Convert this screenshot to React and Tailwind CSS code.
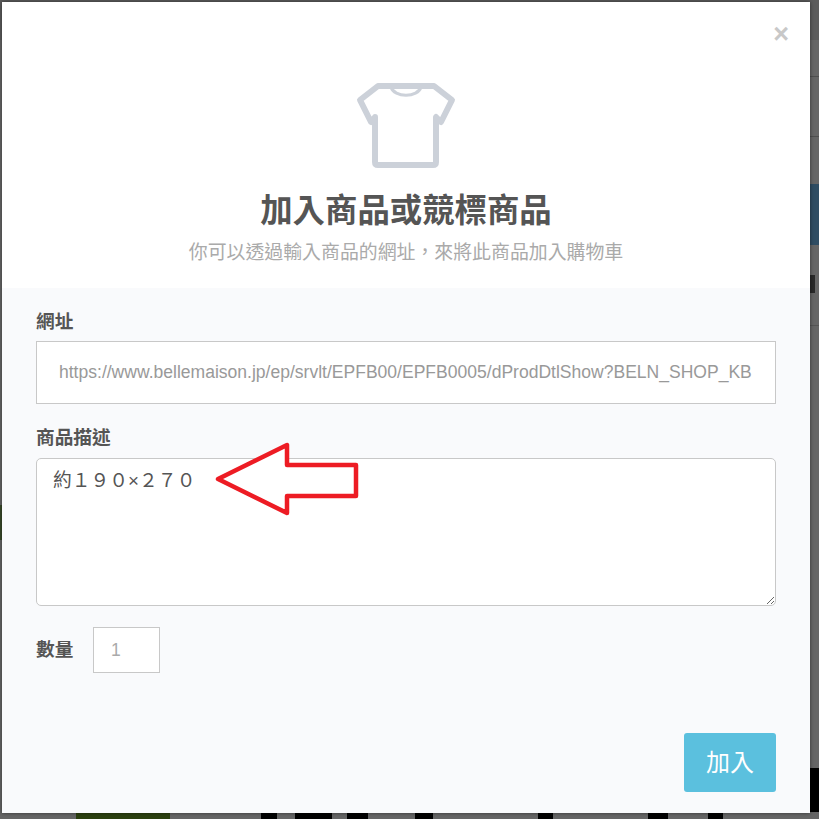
import React from 'react';

const sans = 'font-["Liberation_Sans","Noto_Sans_CJK_TC",sans-serif]';

const ShirtIcon = () => (
  <svg width="100" height="88" viewBox="0 0 100 88" fill="none" className="block">
    <path
      d="M22 4 L78 4 L96 18 L85 40 L80 35 L80 80 Q80 83 77 83 L22 83 Q19 83 19 80 L19 35 L15 40 L4 18 Z"
      stroke="#ccd1d9"
      strokeWidth="6"
      strokeLinejoin="round"
    />
    <path d="M35 5 C38 16 62 16 65 5" stroke="#ccd1d9" strokeWidth="3" />
  </svg>
);

const RedArrow = () => (
  <svg width="146" height="76" viewBox="0 0 146 76" fill="none" className="absolute left-[214px] top-[442px]">
    <path
      d="M4 37 L73 3 L73 23 L142 23 L142 54 L73 54 L73 71 Z"
      fill="#ffffff"
      stroke="#ed1c24"
      strokeWidth="4.5"
      strokeLinejoin="round"
    />
  </svg>
);

const bottomBits = [
  'left-[261px] w-[16px]',
  'left-[295px] w-[37px]',
  'left-[347px] w-[21px]',
  'left-[415px] w-[18px]',
  'left-[538px] w-[15px]',
  'left-[648px] w-[20px]',
  'left-[708px] w-[15px]',
];

const Backdrop = () => (
  <div className="absolute inset-0 bg-[#666666]">
    <div className="absolute left-0 top-0 h-[40px] w-full bg-[#5c5c5c]" />
    <div className="absolute left-[810px] top-[76px] h-px w-[9px] bg-[#4f4f4f]" />
    <div className="absolute left-[810px] top-[136px] h-px w-[9px] bg-[#4f4f4f]" />
    <div className="absolute left-[810px] top-[184px] h-[61px] w-[9px] bg-[#2f4d63]" />
    <div className="absolute left-[810px] top-[275px] h-[18px] w-[5px] bg-[#2a2a2a]" />
    <div className="absolute left-[810px] top-[325px] h-px w-[9px] bg-[#555555]" />
    <div className="absolute left-0 top-[505px] h-[35px] w-[2px] bg-[#3a4a2a]" />
    <div className="absolute left-[76px] top-[813px] h-[6px] w-[94px] bg-[#2c4010]" />
    {bottomBits.map((cls) => (
      <div key={cls} className={`absolute top-[813px] h-[6px] bg-black ${cls}`} />
    ))}
    <div className="absolute left-[810px] top-[768px] h-[44px] w-[9px] bg-black" />
  </div>
);

export default function App() {
  return (
    <div className={`relative h-[819px] w-[819px] overflow-hidden ${sans}`}>
      <Backdrop />
      <div className="absolute left-[2px] top-[2px] flex h-[811px] w-[808px] flex-col bg-white shadow-[0_0_4px_rgba(0,0,0,0.5)]">
        <button className="absolute right-[21px] top-[20px] text-[27px] font-bold leading-[24px] text-[#c8c8c8]">×</button>
        <div className="flex h-[286px] flex-col items-center pt-[80px]">
          <ShirtIcon />
          <h2 className="mt-[20px] text-[32.4px] font-bold leading-[42px] text-[#555555]">加入商品或競標商品</h2>
          <p className="mt-[9px] text-[18.9px] leading-[24px] text-[#aaaaaa]">你可以透過輸入商品的網址，來將此商品加入購物車</p>
        </div>
        <div className="flex flex-1 flex-col bg-[#f9fafc] px-[34px]">
          <label className="mt-[22px] text-[18.67px] font-bold leading-[24px] text-[#555555]">網址</label>
          <div className="mt-[7px] flex h-[63px] items-center overflow-hidden border border-[#c8c8c8] bg-white pl-[22px] text-[17.55px] whitespace-nowrap text-[#999999]">
            https://www.bellemaison.jp/ep/srvlt/EPFB00/EPFB0005/dProdDtlShow?BELN_SHOP_KB
          </div>
          <label className="mt-[22px] text-[18.67px] font-bold leading-[24px] text-[#555555]">商品描述</label>
          <textarea
            readOnly
            value="約１９０×２７０"
            className="mt-[8px] h-[148px] rounded-[5px] border border-[#c8c8c8] bg-white px-[16px] py-[9px] text-[18.8px] leading-[26px] text-[#555555] outline-none"
          />
          <div className="mt-[21px] flex items-center">
            <label className="w-[57px] text-[18.67px] font-bold leading-[24px] text-[#555555]">數量</label>
            <div className="flex h-[46px] w-[67px] items-center border border-[#c8c8c8] bg-white pl-[17px] text-[17.55px] text-[#aaaaaa]">1</div>
          </div>
          <div className="mt-[60px] flex justify-end">
            <button className="h-[59px] w-[92px] rounded-[3px] bg-[#5bc0de] text-[24px] text-white">加入</button>
          </div>
        </div>
      </div>
      <RedArrow />
    </div>
  );
}
